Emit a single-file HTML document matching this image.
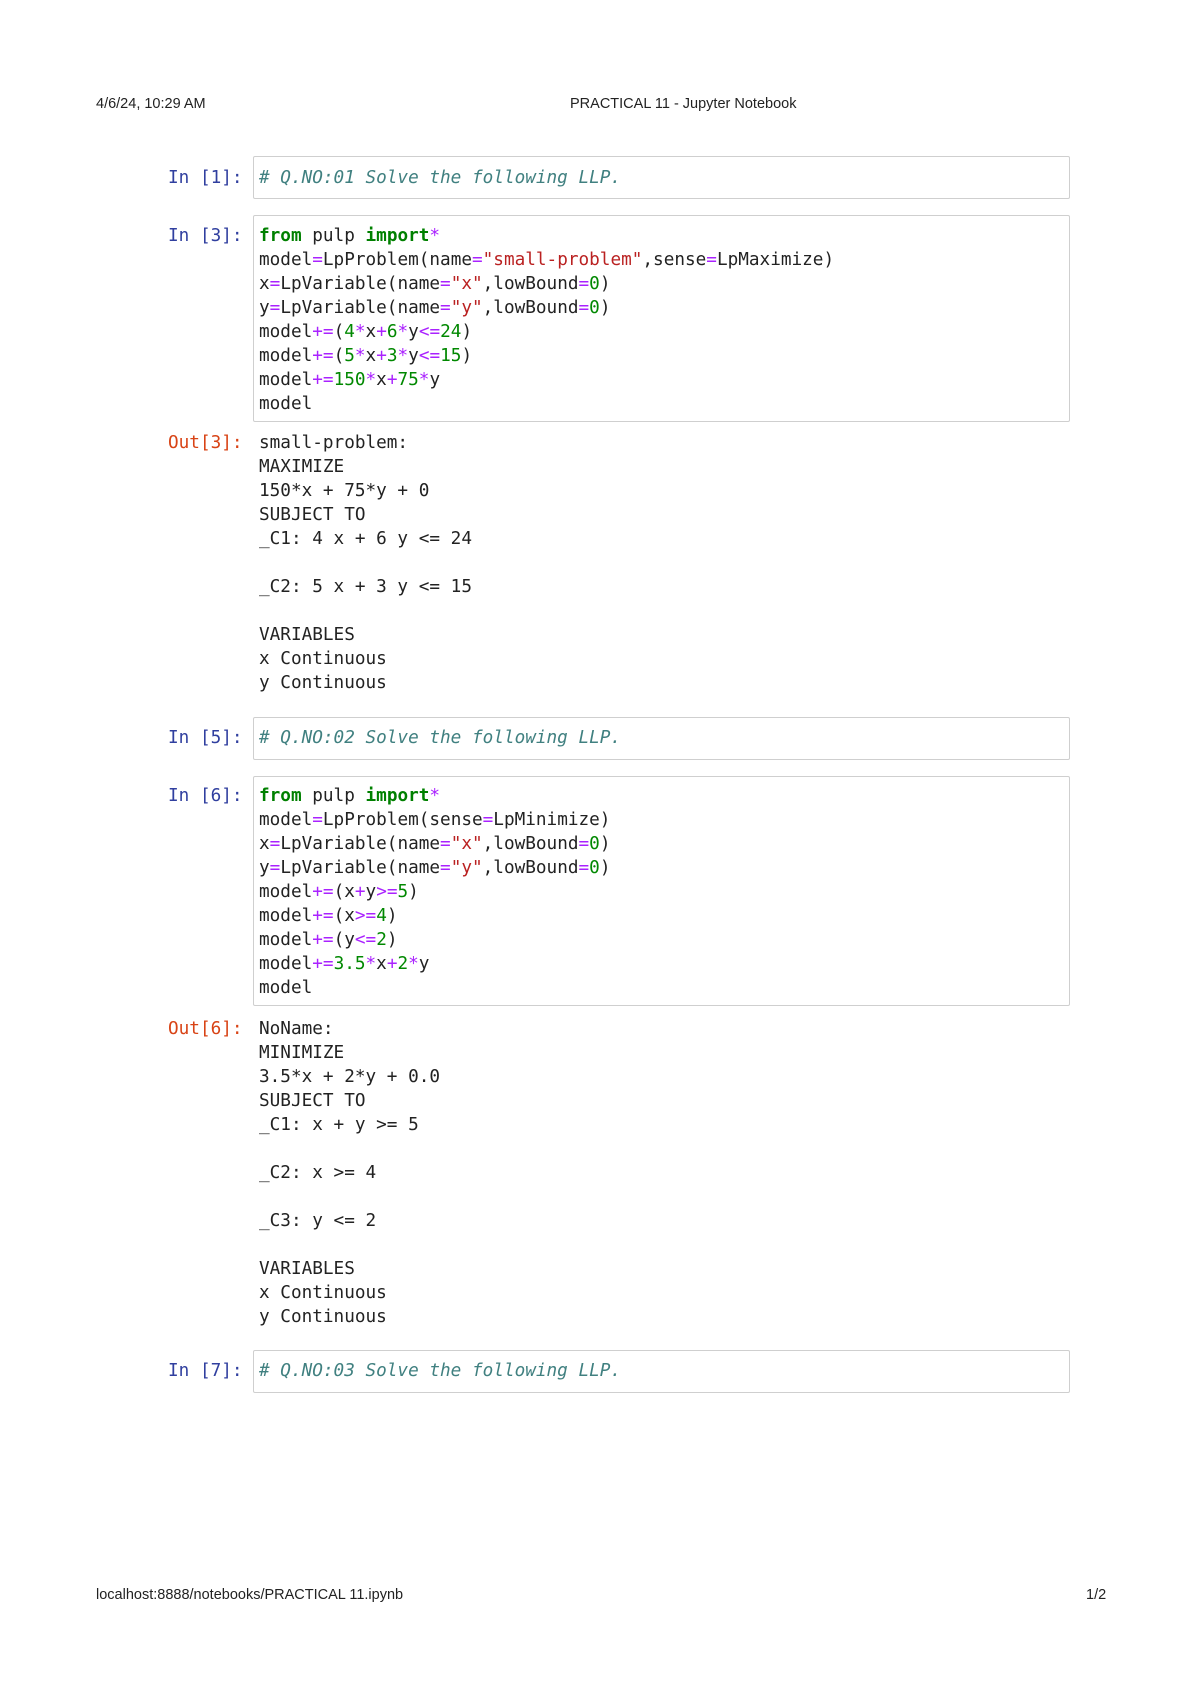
<!DOCTYPE html>
<html><head><meta charset="utf-8"><style>
body{margin:0;width:1200px;height:1698px;background:#fff;position:relative;overflow:hidden}
.hd{position:absolute;font-family:"Liberation Sans",sans-serif;font-size:14.5px;color:#222;line-height:18px}
.box{position:absolute;left:253px;width:815px;border:1px solid #cfcfcf;border-radius:2px;background:#fff}
pre{position:absolute;margin:0;font-family:"DejaVu Sans Mono","Liberation Mono",monospace;font-size:17.7px;line-height:24px;color:#222;white-space:pre}
.p{left:168px;color:#303f9f}
.o{left:168px;color:#d84315}
.c{left:259px}
.cm{color:#408080;font-style:italic}
.k{color:#008000;font-weight:bold}
.s{color:#ba2121}
.n{color:#008800}
.op{color:#aa22ff}
</style></head><body>
<div class="hd" style="left:96px;top:95px">4/6/24, 10:29 AM</div>
<div class="hd" style="left:570px;top:95px">PRACTICAL 11 - Jupyter Notebook</div>

<div class="box" style="top:156px;height:41px"></div>
<pre class="p" style="top:166px">In [1]:</pre>
<pre class="c" style="top:166px"><span class="cm"># Q.NO:01 Solve the following LLP.</span></pre>

<div class="box" style="top:215px;height:205px"></div>
<pre class="p" style="top:224px">In [3]:</pre>
<pre class="c" style="top:224px"><span class="k">from</span> pulp <span class="k">import</span><span class="op">*</span>
model<span class="op">=</span>LpProblem(name<span class="op">=</span><span class="s">"small-problem"</span>,sense<span class="op">=</span>LpMaximize)
x<span class="op">=</span>LpVariable(name<span class="op">=</span><span class="s">"x"</span>,lowBound<span class="op">=</span><span class="n">0</span>)
y<span class="op">=</span>LpVariable(name<span class="op">=</span><span class="s">"y"</span>,lowBound<span class="op">=</span><span class="n">0</span>)
model<span class="op">+=</span>(<span class="n">4</span><span class="op">*</span>x<span class="op">+</span><span class="n">6</span><span class="op">*</span>y<span class="op">&lt;=</span><span class="n">24</span>)
model<span class="op">+=</span>(<span class="n">5</span><span class="op">*</span>x<span class="op">+</span><span class="n">3</span><span class="op">*</span>y<span class="op">&lt;=</span><span class="n">15</span>)
model<span class="op">+=</span><span class="n">150</span><span class="op">*</span>x<span class="op">+</span><span class="n">75</span><span class="op">*</span>y
model</pre>

<pre class="o" style="top:431px">Out[3]:</pre>
<pre class="c" style="top:431px">small-problem:
MAXIMIZE
150*x + 75*y + 0
SUBJECT TO
_C1: 4 x + 6 y &lt;= 24

_C2: 5 x + 3 y &lt;= 15

VARIABLES
x Continuous
y Continuous</pre>

<div class="box" style="top:717px;height:41px"></div>
<pre class="p" style="top:726px">In [5]:</pre>
<pre class="c" style="top:726px"><span class="cm"># Q.NO:02 Solve the following LLP.</span></pre>

<div class="box" style="top:776px;height:228px"></div>
<pre class="p" style="top:784px">In [6]:</pre>
<pre class="c" style="top:784px"><span class="k">from</span> pulp <span class="k">import</span><span class="op">*</span>
model<span class="op">=</span>LpProblem(sense<span class="op">=</span>LpMinimize)
x<span class="op">=</span>LpVariable(name<span class="op">=</span><span class="s">"x"</span>,lowBound<span class="op">=</span><span class="n">0</span>)
y<span class="op">=</span>LpVariable(name<span class="op">=</span><span class="s">"y"</span>,lowBound<span class="op">=</span><span class="n">0</span>)
model<span class="op">+=</span>(x<span class="op">+</span>y<span class="op">&gt;=</span><span class="n">5</span>)
model<span class="op">+=</span>(x<span class="op">&gt;=</span><span class="n">4</span>)
model<span class="op">+=</span>(y<span class="op">&lt;=</span><span class="n">2</span>)
model<span class="op">+=</span><span class="n">3.5</span><span class="op">*</span>x<span class="op">+</span><span class="n">2</span><span class="op">*</span>y
model</pre>

<pre class="o" style="top:1017px">Out[6]:</pre>
<pre class="c" style="top:1017px">NoName:
MINIMIZE
3.5*x + 2*y + 0.0
SUBJECT TO
_C1: x + y &gt;= 5

_C2: x &gt;= 4

_C3: y &lt;= 2

VARIABLES
x Continuous
y Continuous</pre>

<div class="box" style="top:1350px;height:41px"></div>
<pre class="p" style="top:1359px">In [7]:</pre>
<pre class="c" style="top:1359px"><span class="cm"># Q.NO:03 Solve the following LLP.</span></pre>

<div class="hd" style="left:96px;top:1586px">localhost:8888/notebooks/PRACTICAL 11.ipynb</div>
<div class="hd" style="left:1086px;top:1586px">1/2</div>
</body></html>
